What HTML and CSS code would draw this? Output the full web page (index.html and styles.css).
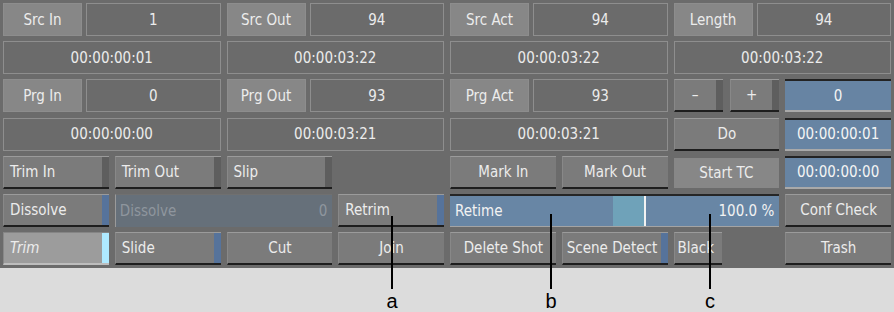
FILE: index.html
```html
<!DOCTYPE html>
<html>
<head>
    <title>Trim Panel</title>
    <link rel="stylesheet" href="styles.css">
</head>
<body>
    <div class="screen">
        <div class="panel">
            <!-- fila 1 -->
            <div class="pair"><span class="lbl">Src In</span><span class="val">1</span></div>
            <div class="pair"><span class="lbl">Src Out</span><span class="val">94</span></div>
            <div class="pair"><span class="lbl">Src Act</span><span class="val">94</span></div>
            <div class="pair"><span class="lbl">Length</span><span class="val">94</span></div>

            <!-- fila 2 -->
            <div class="tc">00:00:00:01</div>
            <div class="tc">00:00:03:22</div>
            <div class="tc">00:00:03:22</div>
            <div class="tc">00:00:03:22</div>

            <!-- fila 3 -->
            <div class="pair"><span class="lbl">Prg In</span><span class="val">0</span></div>
            <div class="pair"><span class="lbl">Prg Out</span><span class="val">93</span></div>
            <div class="pair"><span class="lbl">Prg Act</span><span class="val">93</span></div>
            <div class="duo">
                <div class="btn toggle center">–</div>
                <div class="btn toggle center">+</div>
            </div>
            <div class="blue">0</div>

            <!-- fila 4 -->
            <div class="tc">00:00:00:00</div>
            <div class="tc">00:00:03:21</div>
            <div class="tc">00:00:03:21</div>
            <div class="btn center">Do</div>
            <div class="blue">00:00:00:01</div>

            <!-- fila 5 -->
            <div class="btn toggle">Trim In</div>
            <div class="btn toggle">Trim Out</div>
            <div class="btn toggle">Slip</div>
            <div></div>
            <div class="btn center">Mark In</div>
            <div class="btn center">Mark Out</div>
            <div class="flat">Start TC</div>
            <div class="blue">00:00:00:00</div>

            <!-- fila 6 -->
            <div class="btn toggle on">Dissolve</div>
            <div class="disabled"><span>Dissolve</span><span>0</span></div>
            <div class="btn toggle on">Retrim</div>
            <div class="retime"><span>Retime</span><span>100.0 %</span></div>
            <div class="btn center">Conf Check</div>

            <!-- fila 7 -->
            <div class="btn toggle pressed">Trim</div>
            <div class="btn toggle on">Slide</div>
            <div class="btn center">Cut</div>
            <div class="btn center">Join</div>
            <div class="btn center">Delete Shot</div>
            <div class="btn toggle on tight">Scene Detect</div>
            <div class="duo"><div class="btn black">Black</div></div>
            <div class="btn center">Trash</div>
        </div>

        <div class="caption"></div>

        <svg class="callouts" width="894" height="312" viewBox="0 0 894 312">
            <line x1="392" y1="216" x2="392" y2="289" />
            <line x1="551" y1="214" x2="551" y2="289" />
            <line x1="710" y1="214" x2="710" y2="289" />
            <text x="392" y="308">a</text>
            <text x="551" y="308">b</text>
            <text x="710" y="308">c</text>
        </svg>
    </div>
</body>
</html>
```

FILE: styles.css
```css
* {
    margin: 0;
    padding: 0;
    box-sizing: border-box;
}

body {
    width: 894px;
    height: 312px;
    background-color: #dcdcdc;
    font-family: "DejaVu Sans Condensed", "DejaVu Sans", sans-serif;
    font-stretch: condensed;
    font-size: 15px;
    color: #ececec;
    overflow: hidden;
}

.screen {
    position: relative;
    width: 894px;
    height: 312px;
}

.panel {
    height: 268px;
    background-color: #6b6b6b;
    padding: 3px;
    display: grid;
    grid-template-columns: repeat(8, 1fr);
    grid-template-rows: repeat(7, 33px);
    column-gap: 6px;
    row-gap: 5.2px;
}

.caption {
    height: 44px;
}

/* campos de cabecera */
.pair {
    grid-column: span 2;
    display: flex;
    gap: 4px;
}

.lbl,
.flat {
    width: 79px;
    background-color: #878787;
    border: 1px solid #8d8d8d;
    display: flex;
    align-items: center;
    justify-content: center;
}

.flat {
    width: auto;
    margin: 2px 0 1px;
    border: none;
}

.val,
.tc {
    flex: 1;
    border: 1px solid #8e8e8e;
    display: flex;
    align-items: center;
    justify-content: center;
}

.tc {
    grid-column: span 2;
}

.blue {
    background-color: #6784a3;
    border-top: 2px solid #232323;
    border-bottom: 2px solid #a9a9a9;
    display: flex;
    align-items: center;
    justify-content: center;
    color: #f4f4f4;
}

/* botones */
.btn {
    background-color: #7b7b7b;
    border-top: 1px solid #9b9b9b;
    border-left: 1px solid #888888;
    border-bottom: 2px solid #1e1e1e;
    display: flex;
    align-items: center;
    padding-left: 6px;
    white-space: nowrap;
    overflow: hidden;
}

.btn.center {
    justify-content: center;
    padding-left: 0;
}

.btn.toggle {
    box-shadow: inset -7px 0 0 #5e5e5e;
}

.btn.toggle.center {
    padding-right: 7px;
}

.btn.on {
    box-shadow: inset -7px 0 0 #56739b;
}

.btn.tight {
    padding-left: 4px;
}

.btn.pressed {
    background-color: #9c9c9c;
    border-top: 1px solid #858585;
    border-bottom: 2px solid #bdbdbd;
    box-shadow: inset -7px 0 0 #aee9ff;
    font-style: italic;
}

.duo {
    display: flex;
    gap: 7px;
}

.duo .btn {
    flex: 1;
}

.btn.black {
    flex: 0 0 48px;
    padding-left: 3px;
}

/* campos anchos */
.disabled {
    grid-column: span 2;
    background-color: #66707a;
    border-left: 1px solid #9a9a9a;
    border-top: 1px solid #707070;
    display: flex;
    align-items: center;
    justify-content: space-between;
    padding: 0 5px 0 4px;
    color: #8f969e;
}

.retime {
    grid-column: span 3;
    background: linear-gradient(to right, #6886a5 0 163px, #6fa2b9 163px 194px, #f2f2f2 194px 196px, #6886a5 196px);
    border-top: 2px solid #262626;
    border-bottom: 1px solid #a4a4a4;
    display: flex;
    align-items: center;
    justify-content: space-between;
    padding: 0 5px 0 5px;
    color: #f2f2f2;
}

/* llamadas a, b, c */
.callouts {
    position: absolute;
    left: 0;
    top: 0;
}

.callouts line {
    stroke: #000;
    stroke-width: 2;
}

.callouts text {
    font-family: "Liberation Sans", Arial, sans-serif;
    font-size: 20px;
    text-anchor: middle;
    fill: #000;
}
```
